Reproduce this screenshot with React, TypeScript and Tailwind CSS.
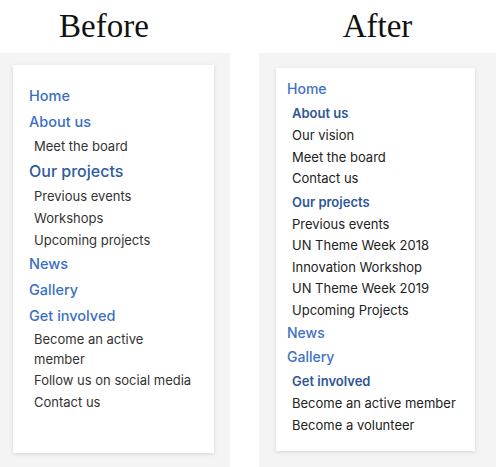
import React from 'react';

type Row = { label: React.ReactNode; kind: 'top' | 'big' | 'sub' | 'item' | 'wrap' };

const beforeMenu: Row[] = [
  { label: 'Home', kind: 'top' },
  { label: 'About us', kind: 'top' },
  { label: 'Meet the board', kind: 'item' },
  { label: 'Our projects', kind: 'big' },
  { label: 'Previous events', kind: 'item' },
  { label: 'Workshops', kind: 'item' },
  { label: 'Upcoming projects', kind: 'item' },
  { label: 'News', kind: 'top' },
  { label: 'Gallery', kind: 'top' },
  { label: 'Get involved', kind: 'top' },
  { label: <>Become an active<br />member</>, kind: 'wrap' },
  { label: 'Follow us on social media', kind: 'item' },
  { label: 'Contact us', kind: 'item' }
];

const afterMenu: Row[] = [
  { label: 'Home', kind: 'top' },
  { label: 'About us', kind: 'sub' },
  { label: 'Our vision', kind: 'item' },
  { label: 'Meet the board', kind: 'item' },
  { label: 'Contact us', kind: 'item' },
  { label: 'Our projects', kind: 'sub' },
  { label: 'Previous events', kind: 'item' },
  { label: 'UN Theme Week 2018', kind: 'item' },
  { label: 'Innovation Workshop', kind: 'item' },
  { label: 'UN Theme Week 2019', kind: 'item' },
  { label: 'Upcoming Projects', kind: 'item' },
  { label: 'News', kind: 'top' },
  { label: 'Gallery', kind: 'top' },
  { label: 'Get involved', kind: 'sub' },
  { label: 'Become an active member', kind: 'item' },
  { label: 'Become a volunteer', kind: 'item' }
];

const BeforeRow = ({ row }: { row: Row }) => {
  if (row.kind === 'top') return <div className="text-[14.5px] leading-[26px] font-medium text-[#3b6fc2]">{row.label}</div>;
  if (row.kind === 'big') return <div className="text-[16px] leading-[28px] font-medium text-[#2e5b9f]">{row.label}</div>;
  if (row.kind === 'wrap') return <div className="pl-[5px] text-[13px] leading-[20px] text-[#333]">{row.label}</div>;
  return <div className="pl-[5px] text-[13px] leading-[22px] text-[#333]">{row.label}</div>;
};

const AfterRow = ({ row }: { row: Row }) => {
  if (row.kind === 'top') return <div className="text-[14px] leading-[24px] font-medium text-[#4272c2]">{row.label}</div>;
  if (row.kind === 'sub') return <div className="pl-[5px] text-[13px] leading-[24px] font-semibold text-[#2f5797]">{row.label}</div>;
  return <div className="pl-[5px] text-[13px] leading-[21.5px] text-[#222]">{row.label}</div>;
};

const Title = ({ children, className = '' }: { children: React.ReactNode; className?: string }) => (
  <div className={`h-[53px] pt-[6px] text-center text-[33px] leading-[40px] text-[#111] font-['Liberation_Serif',serif] ${className}`}>
    {children}
  </div>
);

export default function App() {
  return (
    <div className="flex w-[496px] h-[467px] bg-white font-['Inter',sans-serif] overflow-hidden">
      <div className="w-[230px] flex flex-col">
        <Title className="pr-[22px]">Before</Title>
        <div className="flex-1 bg-[#f4f4f4] pl-[13px] pt-[12px]">
          <div className="w-[201px] h-[388px] bg-white shadow-[0_1px_4px_rgba(0,0,0,0.13)] pt-[18px] pl-[16px]">
            {beforeMenu.map((row, i) => (
              <BeforeRow key={i} row={row} />
            ))}
          </div>
        </div>
      </div>
      <div className="ml-[29px] w-[237px] flex flex-col">
        <Title>After</Title>
        <div className="flex-1 bg-[#f4f4f4] pl-[17px] pt-[15px]">
          <div className="w-[199px] h-[383px] bg-white shadow-[0_1px_4px_rgba(0,0,0,0.13)] pt-[9px] pl-[11px]">
            {afterMenu.map((row, i) => (
              <AfterRow key={i} row={row} />
            ))}
          </div>
        </div>
      </div>
    </div>
  );
}
